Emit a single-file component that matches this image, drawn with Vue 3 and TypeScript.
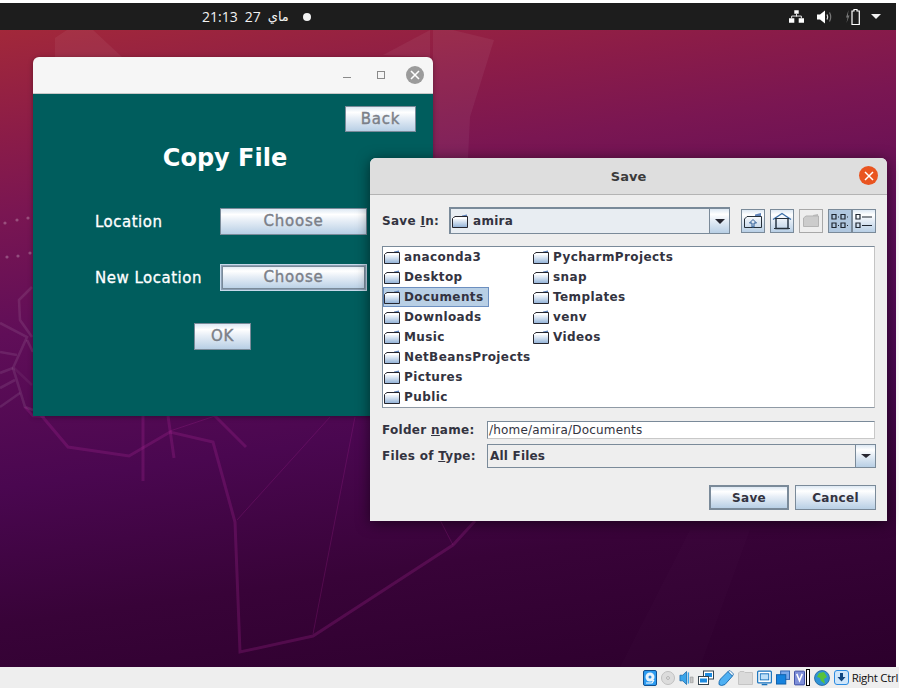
<template>
  <div class="screen">
    <!-- shared gradients -->
    <svg class="defs" width="0" height="0" aria-hidden="true">
      <defs>
        <linearGradient id="folderFill" x1="0" y1="0" x2="0" y2="1">
          <stop offset="0" stop-color="#ffffff" />
          <stop offset="0.35" stop-color="#e6eef7" />
          <stop offset="1" stop-color="#8fb0d6" />
        </linearGradient>
        <symbol id="folder" viewBox="0 0 16 14">
          <path d="M10 1.5 L15 0.5 V3 H10 Z" fill="#5f82b8" />
          <path d="M0.5 4.5 L3 2.5 H15.5 V13.5 H0.5 Z" fill="url(#folderFill)" stroke="#26262e" stroke-width="1" />
          <path d="M1 4.5 H15" stroke="#ffffff" stroke-width="1" />
        </symbol>
      </defs>
    </svg>

    <!-- top panel -->
    <header class="panel">
      <div class="clock">
        <span>21:13</span>
        <span>27</span>
        <span class="month">ماي</span>
        <i class="clock__dot"></i>
      </div>
      <div class="tray">
        <svg width="15" height="13" viewBox="0 0 17 14" class="tray__net">
          <path d="M6 0h5v4H6zM0 9h6v5H0zM11 9h6v5h-6z" fill="#fff" />
          <path d="M8.500 4v3M3 9V6.500h11V9" fill="none" stroke="#fff" stroke-width="1" />
        </svg>
        <svg width="15" height="14" viewBox="0 0 15 14" class="tray__vol">
          <path d="M0 4.500h3L8 0.500v13l-5-4H0z" fill="#fff" />
          <path d="M10 4.500q1.400 2.500 0 5" fill="none" stroke="#ddd" stroke-width="1.200" />
          <path d="M12.500 2.500q2.400 4.500 0 9" fill="none" stroke="#777" stroke-width="1.200" />
        </svg>
        <svg width="15" height="16" viewBox="0 0 15 16" class="tray__bat">
          <path d="M3.500 1 L1 8.500h1.600L1.500 14 4.500 6.500H2.900z" fill="#777" />
          <path d="M9 0.500h3v1.500h2.300v13.500H7V2h2z" fill="none" stroke="#fff" stroke-width="1.200" />
        </svg>
        <i class="tray__arrow"></i>
      </div>
    </header>

    <main class="desktop">
      <!-- wallpaper -->
      <svg class="wallpaper" width="896" height="637" viewBox="0 30 896 637">
        <g fill="#fff" fill-opacity="0.055">
          <path d="M55 38 67 30h26l29 27-67 20z" />
          <path d="M433 30h20l41 10-24 77-2 41h-35z" />
          <path d="M383 55 430 30v27z" />
          <path d="M620 667 690 530h60l-50 137z" fill-opacity="0.012" />
        </g>
        <g fill="none" stroke="#fff" stroke-opacity="0.09" stroke-width="2.600" stroke-linejoin="miter">
          <path d="M32 287 19 300 20 320 32 337" />
          <path d="M0 323 27 337 13 368 25 407 33 410" />
          <path d="M0 352 17 355M0 373 13 368M0 388 15 380M0 407 20 393" />
          <path d="M27 340 33 352" />
          <path d="M32 385 14 368" stroke-opacity="0.05" />
        </g>
        <g fill="none" stroke="#b52a9a" stroke-opacity="0.24" stroke-width="3" stroke-linejoin="miter">
          <path d="M41 415 68 447 129 456 170 432 213 442 235 522 240 652 313 636 453 545 475 521" />
          <path d="M143 416V481M168 416l6 42M215 416l31 31" />
          <path d="M25 407 33 416 45 417" stroke-width="2.600" />
        </g>
        <g fill="none" stroke="#b52a9a" stroke-opacity="0.22" stroke-width="1">
          <path d="M237 520 330 417M313 634 355 417M170 431 215 416M453 545 440 520" />
        </g>
        <g fill="#fff" fill-opacity="0.25">
          <circle cx="5" cy="223" r="1.600" />
          <circle cx="17" cy="220" r="1.600" />
          <circle cx="28" cy="218" r="1.600" />
          <circle cx="7" cy="257" r="1.600" />
          <circle cx="18" cy="256" r="1.600" />
          <circle cx="30" cy="253" r="1.600" />
        </g>
      </svg>

      <!-- Copy File window -->
      <section class="copy-win">
        <div class="copy-win__title">
          <i class="ctl-min"></i>
          <i class="ctl-max"></i>
          <span class="ctl-close">
            <svg width="10" height="10" viewBox="0 0 10 10">
              <path d="M1 1l8 8M9 1L1 9" stroke="#fff" stroke-width="1.600" />
            </svg>
          </span>
        </div>
        <div class="copy-win__body">
          <button class="metal metal--grey back-btn">Back</button>
          <h1 class="copy-title">Copy File</h1>
          <div class="copy-form">
            <label>Location</label>
            <button class="metal metal--grey">Choose</button>
            <label>New Location</label>
            <button class="metal metal--grey metal--hot">Choose</button>
          </div>
          <button class="metal metal--grey ok-btn">OK</button>
        </div>
      </section>

      <!-- Save dialog -->
      <section class="dialog">
        <div class="dialog__title">
          <span>Save</span>
          <span class="dialog__close">
            <svg width="10" height="10" viewBox="0 0 10 10">
              <path d="M1 1l8 8M9 1L1 9" stroke="#fff" stroke-width="1.500" />
            </svg>
          </span>
        </div>
        <div class="dialog__body">
          <div class="look-row">
            <span class="field-label look-label">Save <u>I</u>n:</span>
            <div class="combo combo--look">
              <div class="combo__value">
                <svg class="folder-ico" width="16" height="14"><use href="#folder" /></svg>
                <span>amira</span>
              </div>
              <div class="metal combo__btn"><i class="arrow"></i></div>
            </div>
            <div class="tools">
              <button class="metal tool">
                <svg width="20" height="18" viewBox="0 0 20 18">
                  <path d="M12 2.500 18 1v3h-6z" fill="#5f82b8" />
                  <path d="M1.500 7 4 4.500h14.500v11H1.500z" fill="none" stroke="#26303a" />
                  <path d="M10 7.500 6.500 11H9v4h2v-4h2.500z" fill="none" stroke="#2d5c96" />
                </svg>
              </button>
              <button class="metal tool tool--gap">
                <svg width="20" height="18" viewBox="0 0 20 18">
                  <path d="M1 7.500 10 1.500l9 6" fill="none" stroke="#3a6ea8" stroke-width="1.400" />
                  <path d="M3 6.500h14" stroke="#26303a" />
                  <path d="M4 7v9.500h12V7" fill="none" stroke="#1c2a3a" stroke-width="1.400" />
                  <path d="M2 16.500h16" stroke="#26303a" />
                </svg>
              </button>
              <button class="tool tool--off tool--gap">
                <svg width="16" height="13" viewBox="0 0 16 13">
                  <path d="M10 1l5-1v3h-5z" fill="#bbb" />
                  <path d="M0.500 4 3 2h12.500v10.500H.5z" fill="#ccc" stroke="#b4b4b4" />
                </svg>
              </button>
              <button class="metal tool tool--on tool--gap">
                <svg width="18" height="16" viewBox="0 0 18 16">
                  <path d="M1 1.500h4v4.500H1zM1 10h4v4.500H1zM10 1.500h4v4.500h-4zM10 10h4v4.500h-4z" fill="none" stroke="#1e2630" stroke-width="1.200" />
                  <path d="M7 4h1M7 12.500h1M16 4h1M16 12.500h1" stroke="#1e2630" />
                </svg>
              </button>
              <button class="metal tool">
                <svg width="18" height="16" viewBox="0 0 18 16">
                  <path d="M1 1.500h4v4.500H1zM1 10h4v4.500H1z" fill="none" stroke="#1e2630" stroke-width="1.200" />
                  <path d="M7 4h10M7 12.500h10" stroke="#1e2630" stroke-width="1.200" />
                </svg>
              </button>
            </div>
          </div>

          <div class="file-list">
            <div
              v-for="name in folders"
              :key="name"
              class="file-item"
              :class="{ 'file-item--sel': name === selected }"
            >
              <svg class="folder-ico" width="16" height="14"><use href="#folder" /></svg>
              <span>{{ name }}</span>
            </div>
          </div>

          <div class="name-row">
            <span class="field-label">Folder <u>n</u>ame:</span>
            <div class="name-input">/home/amira/Documents</div>
          </div>
          <div class="type-row">
            <span class="field-label">Files of <u>T</u>ype:</span>
            <div class="combo combo--type">
              <div class="combo__value">All Files</div>
              <div class="metal combo__btn"><i class="arrow arrow--small"></i></div>
            </div>
          </div>
          <div class="actions">
            <button class="metal action action--default">Save</button>
            <button class="metal action">Cancel</button>
          </div>
        </div>
      </section>
    </main>

    <!-- VirtualBox status bar -->
    <footer class="statusbar">
      <div class="vbox-icons">
        <svg width="14" height="16" viewBox="0 0 14 16">
          <rect x="0.500" y="0.500" width="13" height="15" rx="1.500" fill="#2c9bf0" stroke="#12508f" />
          <circle cx="7" cy="7" r="4.500" fill="#e8f3fc" />
          <circle cx="7" cy="7" r="1.500" fill="#2c8fe0" />
          <path d="M3 13h6l2-3" fill="none" stroke="#fff" stroke-width="1.200" />
        </svg>
        <svg width="14" height="16" viewBox="0 0 15 16">
          <circle cx="7.500" cy="8" r="7" fill="#dcdcdc" stroke="#bdbdbd" />
          <circle cx="7.500" cy="8" r="1.500" fill="#f4f4f4" stroke="#aaa" />
        </svg>
        <svg width="15" height="16" viewBox="0 0 16 16">
          <path d="M1 5h3l4-4v14l-4-4H1z" fill="#3aa5ea" stroke="#1565a8" stroke-width="0.800" />
          <path d="M10 2v12" stroke="#3aa5ea" stroke-width="1.500" />
          <path d="M12 7h3v6h-3z" fill="#c8c8c8" stroke="#999" stroke-width="0.700" />
        </svg>
        <svg width="16" height="16" viewBox="0 0 16 16">
          <rect x="5.500" y="1" width="10" height="8" fill="#fff" stroke="#33434f" />
          <rect x="7" y="3" width="7" height="4" fill="#1c8ae0" />
          <rect x="0.500" y="6.500" width="10" height="8" fill="#fff" stroke="#33434f" />
          <rect x="2" y="8.500" width="7" height="4" fill="#1c8ae0" />
        </svg>
        <svg width="16" height="16" viewBox="0 0 16 16">
          <path d="M10 1.500l4.500 4.500L7 14.500q-4 2-6 0 -0.500-3 1.500-5.500z" fill="#4fb0f2" stroke="#1467ad" stroke-width="0.900" />
          <path d="M10 1.500l2-1 3.500 3.500-1 2z" fill="#fff" stroke="#1467ad" stroke-width="0.800" />
        </svg>
        <svg width="15" height="15" viewBox="0 0 15 15">
          <path d="M0.500 3 2 1.500h4l1 1h7.500v12H.5z" fill="#dadada" stroke="#c4c4c4" />
        </svg>
        <svg width="15" height="16" viewBox="0 0 16 16">
          <rect x="0.700" y="0.700" width="14.600" height="12.600" rx="1" fill="#fff" stroke="#1672bd" stroke-width="1.300" />
          <rect x="3.500" y="3.500" width="9" height="6.500" fill="#bde0f8" stroke="#1672bd" />
          <path d="M5 15h6" stroke="#1672bd" stroke-width="1.500" />
        </svg>
        <svg width="14" height="15" viewBox="0 0 15 15">
          <rect x="5" y="0.500" width="9.500" height="9" fill="#7aa8ea" stroke="#2a5fae" />
          <rect x="0.500" y="4.500" width="10" height="10" fill="#1683de" stroke="#0f5ea8" />
        </svg>
        <svg width="11" height="16" viewBox="0 0 12 16">
          <rect x="0.500" y="0.500" width="11" height="15" rx="1" fill="#7e8fd8" stroke="#3546a0" />
          <path d="M3 3.500 6 11l3-7.500" fill="none" stroke="#fff" stroke-width="1.700" />
        </svg>
        <i class="vbox-bar"></i>
        <svg width="16" height="16" viewBox="0 0 16 16">
          <circle cx="8" cy="8" r="7.500" fill="#2f93d6" stroke="#15588f" stroke-width="0.700" />
          <path d="M5 3l5-1 3 5-3 2 1 5-4-3-1-3-3-1z" fill="#57c23c" />
        </svg>
        <svg width="15" height="15" viewBox="0 0 15 15">
          <rect x="0.500" y="0.500" width="14" height="14" rx="2.500" fill="#cfe6fa" stroke="#2c8be0" />
          <path d="M6 3h3v4h2.500l-4 4.500-4-4.500H6z" fill="#10467f" />
        </svg>
      </div>
      <span class="hostkey">Right Ctrl</span>
    </footer>
  </div>
</template>

<script setup lang="ts">
const folders: string[] = [
  'anaconda3',
  'Desktop',
  'Documents',
  'Downloads',
  'Music',
  'NetBeansProjects',
  'Pictures',
  'Public',
  'PycharmProjects',
  'snap',
  'Templates',
  'venv',
  'Videos',
]

const selected = 'Documents'
</script>

<style>
html,
body {
  margin: 0;
  background: #fff;
}
</style>

<style scoped>
.screen {
  width: 899px;
  height: 688px;
  display: flex;
  flex-direction: column;
  overflow: hidden;
  background: #fff;
  padding-top: 3px;
  box-sizing: border-box;
  font-family: "DejaVu Sans", sans-serif;
}

.defs {
  position: absolute;
}

/* top panel */
.panel {
  height: 27px;
  width: 896px;
  flex: none;
  background: #1d1d1d;
  display: flex;
  align-items: center;
  justify-content: space-between;
  color: #fff;
}

.clock {
  display: flex;
  align-items: center;
  margin-left: 202px;
  font-family: "Open Sans", "DejaVu Sans", sans-serif;
  font-size: 14px;
  color: #f2f2f2;
}

.clock span {
  margin-right: 7px;
}

.clock .month {
  margin-right: 0;
  font-family: "DejaVu Sans", sans-serif;
  font-size: 13px;
}

.clock__dot {
  width: 8px;
  height: 8px;
  border-radius: 50%;
  background: #f2f2f2;
  margin-left: 14px;
}

.tray {
  display: flex;
  align-items: center;
  margin-right: 15px;
}

.tray__vol {
  margin-left: 13px;
}

.tray__bat {
  margin-left: 13px;
}

.tray__arrow {
  margin-left: 11px;
  width: 0;
  height: 0;
  border-left: 5px solid transparent;
  border-right: 5px solid transparent;
  border-top: 5px solid #f2f2f2;
}

/* desktop */
.desktop {
  position: relative;
  flex: 1;
  width: 896px;
  background: linear-gradient(172deg, #a2283a 0, #8b1c48 14%, #7a1652 24%, #600e58 40%, #4a0750 60%, #380338 78%, #2c002c 100%);
}

.wallpaper {
  position: absolute;
  left: 0;
  top: 0;
}

/* copy window */
.copy-win {
  position: absolute;
  left: 33px;
  top: 27px;
  width: 400px;
  height: 359px;
  border-radius: 6px 6px 0 0;
  overflow: hidden;
  display: flex;
  flex-direction: column;
  box-shadow: 0 1px 5px rgba(0, 0, 0, 0.35);
}

.copy-win__title {
  height: 37px;
  box-sizing: border-box;
  flex: none;
  background: #f6f6f6;
  border-bottom: 1px solid #c8c8c8;
  display: flex;
  align-items: center;
  justify-content: flex-end;
  padding: 0 9px 1px 0;
}

.ctl-min {
  width: 8px;
  height: 1px;
  background: #8a8a8a;
  margin-top: 6px;
  margin-right: 26px;
}

.ctl-max {
  width: 6px;
  height: 6px;
  border: 1px solid #8a8a8a;
  margin-right: 21px;
}

.ctl-close {
  width: 18px;
  height: 18px;
  border-radius: 50%;
  background: #9b9b9b;
  display: flex;
  align-items: center;
  justify-content: center;
}

.copy-win__body {
  flex: 1;
  background: #005d5d;
  padding: 12px 17px 0 0;
  display: flex;
  flex-direction: column;
}

.metal {
  box-sizing: border-box;
  border: 1px solid #7a8a99;
  background: linear-gradient(#dde8f3 0, #ffffff 22%, #e8eff7 45%, #b8cfe5 100%);
  font-family: "DejaVu Sans", sans-serif;
  font-weight: 700;
  font-size: 12px;
  letter-spacing: 0.3px;
  color: #333340;
  padding: 0;
}

.metal--grey {
  color: #7b7f88;
  font-size: 15px;
  font-weight: 400;
  letter-spacing: 0.8px;
  -webkit-text-stroke: 0.4px #7b7f88;
  padding-bottom: 2px;
}

.metal--hot {
  border: 2px solid #8da0b5;
  outline: 1px solid #c7d9ea;
  outline-offset: -1px;
  box-shadow: inset 0 0 0 1px #7a8a99;
}

.back-btn {
  width: 71px;
  height: 26px;
  align-self: flex-end;
  padding-bottom: 0;
}

.copy-title {
  margin: 11px 0 0;
  height: 30px;
  line-height: 30px;
  text-align: center;
  color: #fff;
  font-size: 24px;
  font-weight: 700;
  padding-left: 1px;
}

.copy-form {
  margin: 35px 0 0 62px;
  display: grid;
  grid-template-columns: 125px 147px;
  grid-auto-rows: 27px;
  row-gap: 29px;
  align-items: center;
  color: #fff;
  font-size: 15px;
  letter-spacing: 0.5px;
}

.copy-form label {
  -webkit-text-stroke: 0.3px #fff;
}

.copy-form button {
  height: 27px;
}

.ok-btn {
  width: 57px;
  height: 27px;
  margin: 32px 0 0 161px;
  align-self: flex-start;
}

/* save dialog */
.dialog {
  position: absolute;
  left: 370px;
  top: 128px;
  width: 517px;
  height: 363px;
  border-radius: 6px 6px 0 0;
  overflow: hidden;
  background: #eeeeee;
  display: flex;
  flex-direction: column;
  box-shadow: 0 2px 14px rgba(0, 0, 0, 0.55);
  z-index: 2;
}

.dialog__title {
  height: 35px;
  flex: none;
  background: #dedede;
  border-bottom: 1px solid #b4b4b4;
  display: flex;
  align-items: center;
  justify-content: center;
  position: relative;
  font-size: 13px;
  font-weight: 700;
  color: #3b3b3b;
  padding-top: 1px;
}

.dialog__close {
  position: absolute;
  right: 9px;
  top: 8px;
  width: 19px;
  height: 19px;
  border-radius: 50%;
  background: #e95420;
  display: flex;
  align-items: center;
  justify-content: center;
}

.dialog__body {
  flex: 1;
  padding: 12px 11px 0 12px;
  display: flex;
  flex-direction: column;
}

.field-label {
  width: 105px;
  flex: none;
  font-size: 12px;
  font-weight: 700;
  letter-spacing: 0.3px;
  color: #333340;
}

.look-label {
  width: 67px;
}

.look-row {
  display: flex;
  align-items: center;
  height: 27px;
}

.combo {
  display: flex;
  box-sizing: border-box;
  border: 1px solid #7a8a99;
  background: #ecf0f4;
}

.combo--look {
  width: 281px;
  height: 27px;
  border-width: 2px 1px 1px 2px;
}

.combo--type {
  flex: 1;
  height: 24px;
}

.combo__value {
  flex: 1;
  display: flex;
  align-items: center;
  gap: 5px;
  padding-left: 1px;
  font-size: 12px;
  font-weight: 700;
  letter-spacing: 0.3px;
  color: #333340;
  background: #e8edf2;
  border-right: 1px solid #7a8a99;
}

.combo--type .combo__value {
  padding-left: 2px;
  background: #eeeeee;
  letter-spacing: 0.2px;
}

.combo__btn {
  width: 19px;
  border: none;
  display: flex;
  align-items: center;
  justify-content: center;
}

.arrow {
  width: 0;
  height: 0;
  border-left: 5px solid transparent;
  border-right: 5px solid transparent;
  border-top: 5px solid #262630;
}

.arrow--small {
  border-top-width: 4px;
}

.tools {
  display: flex;
  margin-left: 11px;
}

.tool {
  width: 24px;
  height: 24px;
  box-sizing: border-box;
  display: flex;
  align-items: center;
  justify-content: center;
  padding: 0;
}

.tool--gap {
  margin-left: 5px;
}

.tool--off {
  background: #eeeeee;
  border: 1px solid #a8a8a8;
}

.tool--on {
  background: #b0c7df;
}

.file-list {
  margin-top: 12px;
  width: 493px;
  height: 162px;
  box-sizing: border-box;
  flex: none;
  background: #fff;
  border: 1px solid #7a8a99;
  border-right-color: #c4c4c4;
  border-bottom-color: #8f9aa5;
  display: grid;
  grid-auto-flow: column;
  grid-template-rows: repeat(8, 20px);
  grid-template-columns: 149px 1fr;
  align-content: start;
}

.file-item {
  display: flex;
  align-items: center;
  gap: 4px;
  box-sizing: border-box;
  border: 1px solid transparent;
  justify-self: start;
  height: 20px;
  font-size: 12px;
  font-weight: 700;
  letter-spacing: 0.4px;
  color: #333340;
  white-space: nowrap;
  padding-right: 4px;
}

.file-item--sel {
  background: #b8cfe5;
  border-color: #6c8fc0;
}

.folder-ico {
  flex: none;
}

.name-row {
  display: flex;
  align-items: center;
  margin-top: 13px;
  padding-right: 1px;
}

.name-input {
  flex: 1;
  height: 18px;
  line-height: 16px;
  box-sizing: border-box;
  background: #fff;
  border: 1px solid #7a8a99;
  border-right-color: #c8c8c8;
  border-bottom-color: #c8c8c8;
  padding-left: 1px;
  font-size: 12px;
  letter-spacing: 0.2px;
  color: #333340;
}

.type-row {
  display: flex;
  align-items: center;
  margin-top: 5px;
}

.actions {
  display: flex;
  justify-content: flex-end;
  gap: 6px;
  margin-top: 17px;
}

.action {
  width: 81px;
  height: 25px;
}

.action--default {
  border: 2px solid #7a8a99;
  width: 80px;
}

/* virtualbox bar */
.statusbar {
  flex: none;
  height: 21px;
  background: #eeeeee;
  display: flex;
  align-items: center;
  justify-content: flex-end;
}

.vbox-icons {
  display: flex;
  align-items: center;
  gap: 4px;
  margin-right: 3px;
}

.vbox-bar {
  width: 2px;
  height: 15px;
  border: 1px solid #000;
  margin-left: -3px;
  background: #fff;
}

.hostkey {
  font-family: "Open Sans", sans-serif;
  font-size: 11.5px;
  letter-spacing: -0.3px;
  color: #111;
  white-space: nowrap;
  margin-right: 1px;
}
</style>
